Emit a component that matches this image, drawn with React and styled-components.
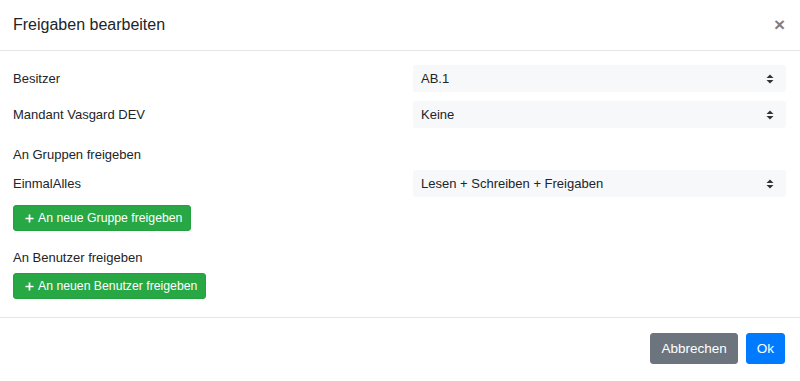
import styled, { createGlobalStyle } from "styled-components";

const GlobalStyle = createGlobalStyle`
  html, body {
    margin: 0;
    padding: 0;
    background: #ffffff;
    font-family: "Liberation Sans", Arial, sans-serif;
    color: #212529;
  }
`;

const Modal = styled.div`
  width: 800px;
  height: 381px;
  display: flex;
  flex-direction: column;
  background: #fff;
`;

const Header = styled.div`
  height: 51px;
  display: flex;
  align-items: center;
  justify-content: space-between;
  padding: 0 14px 1px 13px;
  border-bottom: 1px solid #e3e5e8;
  box-sizing: border-box;
`;

const Title = styled.h5`
  margin: 0;
  font-size: 16px;
  font-weight: 400;
  color: #212529;
`;

const Close = styled.button`
  border: 0;
  background: none;
  padding: 0;
  font-family: "Liberation Sans", Arial, sans-serif;
  font-size: 19px;
  font-weight: 700;
  line-height: 1;
  color: #000;
  opacity: 0.5;
  margin-right: 1px;
`;

const Body = styled.div`
  padding: 14px 14px 18px 13px;
  border-bottom: 1px solid #e3e5e8;
  display: flex;
  flex-direction: column;
`;

const Row = styled.div`
  display: grid;
  grid-template-columns: 1fr 1fr;
  column-gap: 27px;
  align-items: center;
  height: 27px;
  margin-top: ${(p) => p.$gap || 0}px;
`;

const Label = styled.span`
  font-size: 13px;
  color: #212529;
`;

const Heading = styled.div`
  font-size: 13px;
  line-height: 18px;
  margin: 18px 0 6px;
  color: #212529;
`;

const Select = styled.div`
  height: 27px;
  display: flex;
  align-items: center;
  justify-content: space-between;
  padding: 0 12px 0 8px;
  background: #f7f8f9;
  border-radius: 3px;
  font-size: 13px;
  color: #212529;
`;

const AddButton = styled.button`
  align-self: flex-start;
  height: 26px;
  margin-top: ${(p) => p.$gap || 0}px;
  display: flex;
  align-items: center;
  gap: 4px;
  padding: 0 8px 0 11px;
  border: 1px solid #23a03f;
  border-radius: 3px;
  background: #28a745;
  color: #fff;
  font-family: "Liberation Sans", Arial, sans-serif;
  font-size: 12.25px;
`;

const Footer = styled.div`
  flex: 1;
  display: flex;
  justify-content: flex-end;
  align-items: flex-start;
  gap: 8px;
  padding: 15px 15px 0 0;
`;

const FooterButton = styled.button`
  height: 31px;
  padding: 0 10px;
  border: 1px solid ${(p) => (p.$primary ? "#007bff" : "#6c757d")};
  border-radius: 3px;
  background: ${(p) => (p.$primary ? "#007bff" : "#6c757d")};
  color: #fff;
  font-family: "Liberation Sans", Arial, sans-serif;
  font-size: 13.5px;
`;

const Updown = () => (
  <svg width="8" height="10" viewBox="0 0 8 10">
    <path d="M4 0.5 L7.5 4 H0.5 Z" fill="#333" />
    <path d="M4 9.5 L7.5 6 H0.5 Z" fill="#333" />
  </svg>
);

const Plus = () => (
  <svg width="9" height="9" viewBox="0 0 10 10">
    <path d="M5 0.5 V9.5 M0.5 5 H9.5" stroke="#fff" strokeWidth="1.9" />
  </svg>
);

const FieldRow = ({ label, value, gap }) => (
  <Row $gap={gap}>
    <Label>{label}</Label>
    <Select>
      <span>{value}</span>
      <Updown />
    </Select>
  </Row>
);

export default function App() {
  return (
    <>
      <GlobalStyle />
      <Modal>
        <Header>
          <Title>Freigaben bearbeiten</Title>
          <Close>×</Close>
        </Header>
        <Body>
          <FieldRow label="Besitzer" value="AB.1" />
          <FieldRow label="Mandant Vasgard DEV" value="Keine" gap={9} />
          <Heading>An Gruppen freigeben</Heading>
          <FieldRow label="EinmalAlles" value="Lesen + Schreiben + Freigaben" />
          <AddButton $gap={8}>
            <Plus />
            An neue Gruppe freigeben
          </AddButton>
          <Heading>An Benutzer freigeben</Heading>
          <AddButton>
            <Plus />
            An neuen Benutzer freigeben
          </AddButton>
        </Body>
        <Footer>
          <FooterButton>Abbrechen</FooterButton>
          <FooterButton $primary>Ok</FooterButton>
        </Footer>
      </Modal>
    </>
  );
}
